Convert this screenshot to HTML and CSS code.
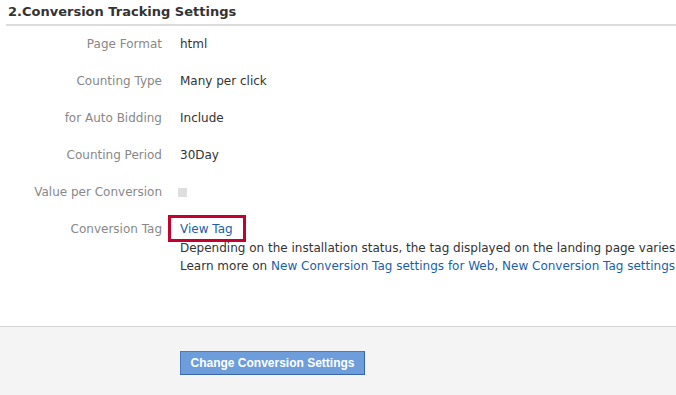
FILE: index.html
```html
<!DOCTYPE html>
<html>
<head>
<meta charset="utf-8">
<link rel="stylesheet" href="styles.css">
</head>
<body>
<div class="page">
  <h2 class="section-title">2.Conversion Tracking Settings</h2>
  <div class="rows">
    <div class="row"><div class="label">Page Format</div><div class="value">html</div></div>
    <div class="row"><div class="label">Counting Type</div><div class="value">Many per click</div></div>
    <div class="row"><div class="label">for Auto Bidding</div><div class="value">Include</div></div>
    <div class="row"><div class="label">Counting Period</div><div class="value">30Day</div></div>
    <div class="row"><div class="label">Value per Conversion</div><div class="value"><span class="checkbox"></span></div></div>
    <div class="row tag-row">
      <div class="label">Conversion Tag</div>
      <div class="value tag-value">
        <div class="highlight"><a class="link" href="#">View Tag</a></div>
        <div class="desc first">Depending on the installation status, the tag displayed on the landing page varies.</div>
        <div class="desc">Learn more on <a class="link" href="#">New Conversion Tag settings for Web</a>, <a class="link" href="#">New Conversion Tag settings for App</a></div>
      </div>
    </div>
  </div>
  <div class="footer">
    <button class="btn">Change Conversion Settings</button>
  </div>
</div>
</body>
</html>
```
FILE: styles.css
```css
html, body {
  margin: 0;
  padding: 0;
  background: #fff;
}
.page {
  width: 676px;
  height: 395px;
  overflow: hidden;
  font-family: "DejaVu Sans", Verdana, sans-serif;
  font-size: 12px;
  color: #333;
  display: flex;
  flex-direction: column;
}
.section-title {
  margin: 0 0 0 6px;
  padding: 4px 0 4px 2px;
  font-size: 13px;
  font-weight: bold;
  line-height: 16px;
  color: #333;
  border-bottom: 2px solid #dcdcdc;
}
.rows {
  display: flex;
  flex-direction: column;
  gap: 21px;
  padding-top: 10px;
  flex: 1;
}
.row {
  display: flex;
  line-height: 16px;
}
.label {
  width: 162px;
  text-align: right;
  color: #888;
  flex-shrink: 0;
}
.value {
  padding-left: 18px;
  color: #333;
  white-space: nowrap;
  min-width: 0;
}
.checkbox {
  display: inline-block;
  width: 9px;
  height: 9px;
  margin-left: -2px;
  background: #dedede;
  vertical-align: -1px;
}
.tag-value {
  line-height: 18px;
  margin-top: -1px;
}
.highlight {
  width: fit-content;
  margin: -5px 0 -4px -12px;
  padding: 2px 10px 1px 9px;
  border: 3px solid #c5002f;
}
.link {
  color: #1a5fa8;
  text-decoration: none;
}
.desc {
  line-height: 18px;
}
.desc.first {
  margin-top: 1px;
}
.footer {
  height: 69px;
  flex-shrink: 0;
  background: #f4f4f4;
  border-top: 1px solid #d4d4d4;
  padding: 24px 0 0 180px;
  box-sizing: border-box;
}
.btn {
  display: block;
  font-family: "Liberation Sans", Arial, sans-serif;
  font-weight: bold;
  font-size: 12px;
  color: #fff;
  background: #6e9ddc;
  border: 1px solid #4a78c0;
  border-bottom-color: #3765a8;
  border-right-color: #3765a8;
  height: 24px;
  width: 185px;
  padding: 0;
  cursor: pointer;
}
```
